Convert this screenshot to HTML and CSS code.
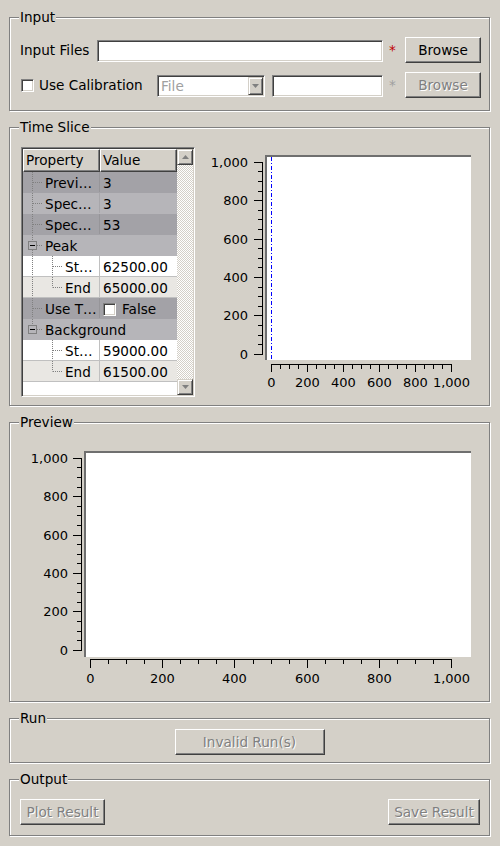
FILE: index.html
```html
<!DOCTYPE html>
<html>
<head>
<meta charset="utf-8">
<link rel="stylesheet" href="styles.css">
</head>
<body>
<div class="group g-input">
  <span class="gtitle">Input</span>
  <div class="row">
    <span class="lbl-files">Input Files</span>
    <span class="ledit grow"></span>
    <span class="star">*</span>
    <span class="btn btn-browse">Browse</span>
  </div>
  <div class="row row2">
    <span class="chk-wrap"><span class="chk"></span><span>Use Calibration</span></span>
    <span class="combo"><span class="combo-text">File</span><span class="combo-arrow"><svg width="7" height="4" viewBox="0 0 7 4"><path d="M0 0H7L3.5 4Z" fill="#808080"/></svg></span></span>
    <span class="ledit ledit-cal"></span>
    <span class="star star-dis">*</span>
    <span class="btn btn-browse dis">Browse</span>
  </div>
</div>

<div class="group g-time">
  <span class="gtitle">Time Slice</span>
  <div class="tree">
    <div class="tview">
      <div class="thead"><div class="hc">Property</div><div class="hc">Value</div></div>
      <div class="tr dk"><div class="tn"><svg class="br1" width="22" height="20"><path d="M9.5 0V20M10 10.5H20"/></svg><span class="tl">Previ…</span></div><div class="tval"><span class="tl">3</span></div></div>
      <div class="tr lt"><div class="tn"><svg class="br1" width="22" height="20"><path d="M9.5 0V20M10 10.5H20"/></svg><span class="tl">Spec…</span></div><div class="tval"><span class="tl">3</span></div></div>
      <div class="tr dk"><div class="tn"><svg class="br1" width="22" height="20"><path d="M9.5 0V20M10 10.5H20"/></svg><span class="tl">Spec…</span></div><div class="tval"><span class="tl">53</span></div></div>
      <div class="tr lt"><div class="tn full"><svg class="br1" width="22" height="20"><path d="M9.5 0V6M9.5 15V20M14 10.5H20"/><rect class="box" x="5.5" y="6.5" width="8" height="8"/><path class="minus" d="M7 10.5H12"/></svg><span class="tl">Peak</span></div></div>
      <div class="tr wh"><div class="tn"><svg class="br1" width="42" height="20"><path d="M9.5 0V20M29.5 0V20M30 10.5H40"/></svg><span class="tl">St…</span></div><div class="tval"><span class="tl">62500.00</span></div></div>
      <div class="tr al"><div class="tn"><svg class="br1" width="42" height="20"><path d="M9.5 0V20M29.5 0V10.5M30 10.5H40"/></svg><span class="tl">End</span></div><div class="tval"><span class="tl">65000.00</span></div></div>
      <div class="tr dk"><div class="tn"><svg class="br1" width="22" height="20"><path d="M9.5 0V20M10 10.5H20"/></svg><span class="tl">Use T…</span></div><div class="tval"><span class="chk chk-cell"></span><span class="tl">False</span></div></div>
      <div class="tr lt"><div class="tn full"><svg class="br1" width="22" height="20"><path d="M9.5 0V6M14 10.5H20"/><rect class="box" x="5.5" y="6.5" width="8" height="8"/><path class="minus" d="M7 10.5H12"/></svg><span class="tl">Background</span></div></div>
      <div class="tr wh"><div class="tn"><svg class="br1" width="42" height="20"><path d="M29.5 0V20M30 10.5H40"/></svg><span class="tl">St…</span></div><div class="tval"><span class="tl">59000.00</span></div></div>
      <div class="tr al"><div class="tn"><svg class="br1" width="42" height="20"><path d="M29.5 0V10.5M30 10.5H40"/></svg><span class="tl">End</span></div><div class="tval"><span class="tl">61500.00</span></div></div>
    </div>
    <div class="vscroll">
      <div class="sbtn"><svg width="7" height="4" viewBox="0 0 7 4"><path d="M3.5 0L7 4H0Z" fill="#808080"/></svg></div>
      <div class="strack"></div>
      <div class="sbtn"><svg width="7" height="4" viewBox="0 0 7 4"><path d="M0 0H7L3.5 4Z" fill="#808080"/></svg></div>
    </div>
  </div>
  <svg class="chart1" width="293" height="250" viewBox="195 147 293 250">
    <rect x="267" y="157" width="204" height="203" fill="#fff"/>
    <rect x="265" y="155" width="2" height="205" fill="#6f6f6f"/>
    <rect x="265" y="155" width="206" height="2" fill="#6f6f6f"/>
    <path d="M271.5 157V360" stroke="#0000ff" stroke-dasharray="4 2 1 2" fill="none"/>
    <g stroke="#000" fill="none" shape-rendering="crispEdges">
      <path d="M262.5 162V355M254 354.5H262M258 344.5H262M258 335.5H262M258 325.5H262M254 315.5H262M258 306.5H262M258 296.5H262M258 287.5H262M254 277.5H262M258 267.5H262M258 258.5H262M258 248.5H262M254 239.5H262M258 229.5H262M258 219.5H262M258 210.5H262M254 200.5H262M258 191.5H262M258 181.5H262M258 171.5H262M254 162.5H262"/>
      <path d="M271 364.5H452M271.5 365V372M280.5 365V369M289.5 365V369M298.5 365V369M307.5 365V372M316.5 365V369M325.5 365V369M334.5 365V369M343.5 365V372M352.5 365V369M361.5 365V369M370.5 365V369M379.5 365V372M388.5 365V369M397.5 365V369M406.5 365V369M415.5 365V372M424.5 365V369M433.5 365V369M442.5 365V369M451.5 365V372"/>
    </g>
    <g class="ax" text-anchor="end">
      <text x="248" y="167">1,000</text>
      <text x="248" y="205">800</text>
      <text x="248" y="244">600</text>
      <text x="248" y="282">400</text>
      <text x="248" y="320">200</text>
      <text x="248" y="359">0</text>
    </g>
    <g class="ax" text-anchor="middle">
      <text x="271.5" y="387">0</text>
      <text x="307.5" y="387">200</text>
      <text x="343.5" y="387">400</text>
      <text x="379.5" y="387">600</text>
      <text x="415.5" y="387">800</text>
      <text x="451.5" y="387">1,000</text>
    </g>
  </svg>
</div>

<div class="group g-prev">
  <span class="gtitle">Preview</span>
  <svg class="chart2" width="479" height="278" viewBox="10 423 479 278">
    <rect x="86" y="453" width="385" height="204" fill="#fff"/>
    <rect x="84" y="451" width="2" height="206" fill="#6f6f6f"/>
    <rect x="84" y="451" width="387" height="2" fill="#6f6f6f"/>
    <g stroke="#000" fill="none" shape-rendering="crispEdges">
      <path d="M81.5 458V651M73 650.5H81M77 640.5H81M77 631.5H81M77 621.5H81M73 611.5H81M77 602.5H81M77 592.5H81M77 583.5H81M73 573.5H81M77 563.5H81M77 554.5H81M77 544.5H81M73 535.5H81M77 525.5H81M77 515.5H81M77 506.5H81M73 496.5H81M77 487.5H81M77 477.5H81M77 467.5H81M73 458.5H81"/>
      <path d="M90 659.5H452M90.5 660V668M108.5 660V664M126.5 660V664M144.5 660V664M162.5 660V668M180.5 660V664M198.5 660V664M216.5 660V664M234.5 660V668M253.5 660V664M271.5 660V664M289.5 660V664M307.5 660V668M325.5 660V664M343.5 660V664M361.5 660V664M379.5 660V668M397.5 660V664M415.5 660V664M433.5 660V664M451.5 660V668"/>
    </g>
    <g class="ax" text-anchor="end">
      <text x="68" y="463">1,000</text>
      <text x="68" y="501">800</text>
      <text x="68" y="540">600</text>
      <text x="68" y="578">400</text>
      <text x="68" y="616">200</text>
      <text x="68" y="655">0</text>
    </g>
    <g class="ax" text-anchor="middle">
      <text x="90.5" y="683">0</text>
      <text x="162.5" y="683">200</text>
      <text x="234.5" y="683">400</text>
      <text x="307.5" y="683">600</text>
      <text x="379.5" y="683">800</text>
      <text x="451.5" y="683">1,000</text>
    </g>
  </svg>
</div>

<div class="group g-run">
  <span class="gtitle">Run</span>
  <span class="btn btn-run dis">Invalid Run(s)</span>
</div>

<div class="group g-out">
  <span class="gtitle">Output</span>
  <span class="btn btn-plot dis">Plot Result</span>
  <span class="btn btn-save dis">Save Result</span>
</div>
</body>
</html>
```

FILE: styles.css
```css
* { box-sizing: border-box; }

body {
  margin: 0;
  padding-top: 17px;
  width: 500px;
  height: 846px;
  overflow: hidden;
  background: #d4d0c8;
  color: #000;
  font: 13.6px "DejaVu Sans", sans-serif;
}

.group {
  position: relative;
  margin: 0 10px 16px 9px;
  border: 1px solid #808080;
  box-shadow: inset 1px 1px 0 #fff, 1px 1px 0 #fff;
}

.gtitle {
  position: absolute;
  left: 9px;
  top: -9px;
  padding: 0 1px;
  line-height: 16px;
  background: #d4d0c8;
}

/* Input */
.g-input { padding: 19px 8px 12px 10px; }

.row {
  display: flex;
  align-items: center;
  height: 26px;
}
.row2 { margin-top: 9px; }

.lbl-files { width: 77px; }

.ledit {
  height: 22px;
  margin-top: 1px;
  background: #fff;
  border: 1px solid;
  border-color: #808080 #fff #fff #808080;
  box-shadow: inset 1px 1px 0 #404040, inset -1px -1px 0 #d4d0c8;
}
.grow { flex: 1; }
.ledit-cal { width: 111px; }

.star {
  width: 22px;
  padding-left: 6px;
  color: #c00000;
}
.star-dis { color: #a0a0a0; }

.btn {
  display: flex;
  align-items: center;
  justify-content: center;
  height: 26px;
  background: #d4d0c8;
  border: 1px solid;
  border-color: #fff #404040 #404040 #fff;
  box-shadow: inset -1px -1px 0 #808080;
  white-space: nowrap;
}
.btn-browse { width: 76px; }
.dis { color: #808080; text-shadow: 1px 1px 0 #fff; }

.chk-wrap {
  width: 137px;
  display: flex;
  align-items: center;
}
.chk {
  width: 13px;
  height: 13px;
  margin-left: 1px;
  margin-right: 5px;
  background: #fff;
  border: 1px solid;
  border-color: #808080 #fff #fff #808080;
  box-shadow: inset 1px 1px 0 #404040, inset -1px -1px 0 #d4d0c8;
}

.combo {
  width: 108px;
  height: 22px;
  margin-top: 1px;
  margin-right: 7px;
  display: flex;
  background: #fff;
  border: 1px solid;
  border-color: #808080 #fff #fff #808080;
  box-shadow: inset 1px 1px 0 #404040, inset -1px -1px 0 #d4d0c8;
  padding: 1px;
}
.combo-text {
  flex: 1;
  padding-left: 2px;
  line-height: 18px;
  color: #a0a0a0;
}
.combo-arrow {
  width: 15px;
  height: 18px;
  display: flex;
  align-items: center;
  justify-content: center;
  background: #d4d0c8;
  border: 1px solid;
  border-color: #d4d0c8 #404040 #404040 #d4d0c8;
  box-shadow: inset 1px 1px 0 #fff, inset -1px -1px 0 #808080;
}

/* Time slice */
.g-time {
  display: flex;
  align-items: flex-start;
  padding: 19px 0 8px 11px;
}

.tree {
  width: 174px;
  height: 250px;
  display: flex;
  border: 1px solid;
  border-color: #808080 #fff #fff #808080;
  box-shadow: inset 1px 1px 0 #404040, inset -1px -1px 0 #d4d0c8;
  padding: 1px;
}
.tview {
  width: 154px;
  background: #fff;
}
.thead {
  display: flex;
  height: 23px;
}
.hc {
  width: 77px;
  padding-left: 2px;
  line-height: 21px;
  background: #d4d0c8;
  border: 1px solid;
  border-color: #fff #404040 #404040 #fff;
  box-shadow: inset -1px -1px 0 #808080;
}

.tr {
  display: flex;
  height: 21px;
  border-bottom: 1px solid #c0c0c0;
}
.dk { background: #a3a2a7; border-bottom-color: #a3a2a7; }
.lt { background: #b6b5b9; border-bottom-color: #b6b5b9; }
.wh { background: #fff; }
.al { background: #e9e7e3; }

.tl {
  line-height: 16px;
  padding-top: 3px;
  white-space: nowrap;
}

.tn {
  width: 77px;
  display: flex;
  align-items: flex-start;
  overflow: hidden;
  border-right: 1px solid #c0c0c0;
}
.dk .tn, .lt .tn { border-right-color: rgba(0, 0, 0, 0.08); }
.tn.full { width: auto; flex: 1; border-right: 0; }
.br1 { flex: none; }
.br1 path { stroke: #808080; stroke-dasharray: 1 1; fill: none; }
.br1 .box { stroke: #808080; fill: none; }
.br1 .minus { stroke: #000; stroke-dasharray: none; }

.tval {
  flex: 1;
  display: flex;
  align-items: flex-start;
  padding-left: 3px;
}
.chk-cell { margin: 5px 6px 0 0; }

.vscroll {
  width: 16px;
  display: flex;
  flex-direction: column;
  background: repeating-conic-gradient(#fff 0 25%, #d4d0c8 0 50%) 0 0 / 2px 2px;
}
.sbtn {
  height: 16px;
  display: flex;
  align-items: center;
  justify-content: center;
  background: #d4d0c8;
  border: 1px solid;
  border-color: #d4d0c8 #404040 #404040 #d4d0c8;
  box-shadow: inset 1px 1px 0 #fff, inset -1px -1px 0 #808080;
}
.strack { flex: 1; }

.chart1, .chart2 { display: block; flex: none; }
.ax text {
  font: 13px "DejaVu Sans", sans-serif;
  fill: #000;
}

/* Preview */
.g-prev { height: 280px; }

/* Run */
.g-run {
  display: flex;
  justify-content: center;
  padding: 10px 0 7px;
}
.btn-run { width: 150px; }

/* Output */
.g-out {
  display: flex;
  justify-content: space-between;
  padding: 19px 9px 10px 10px;
}
.btn-plot { width: 85px; }
.btn-save { width: 92px; }
```
